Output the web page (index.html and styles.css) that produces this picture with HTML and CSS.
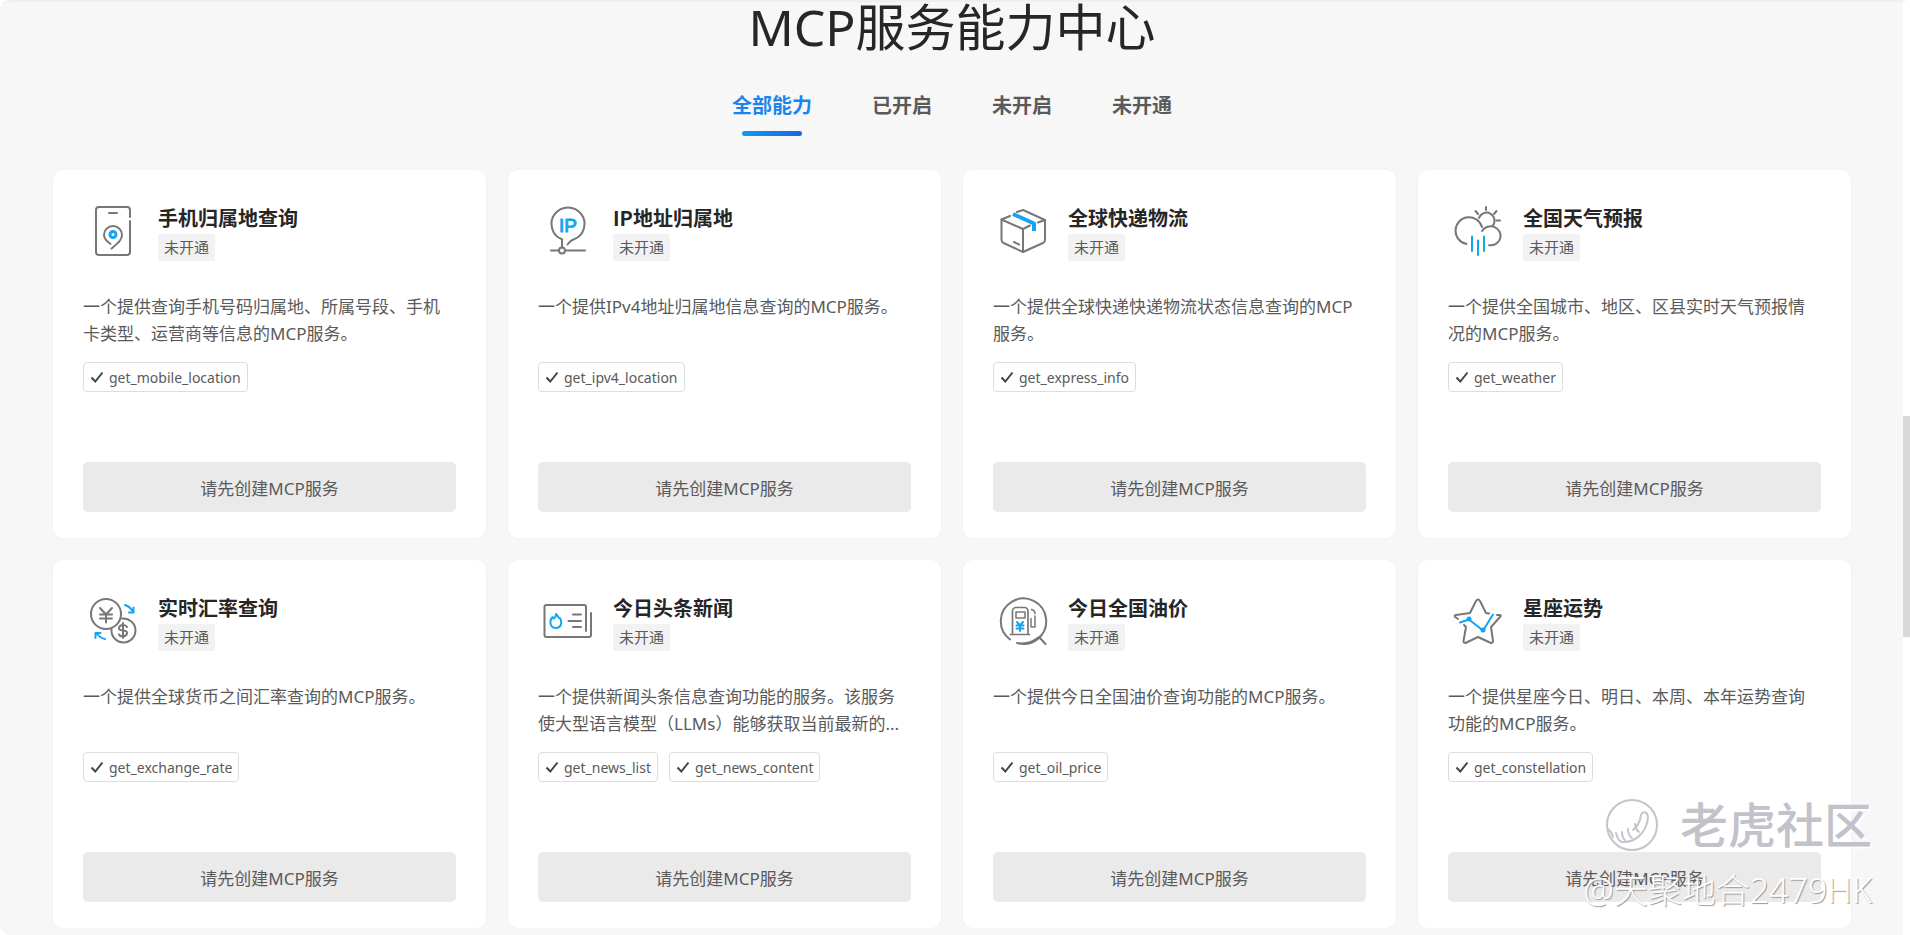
FILE: index.html
```html
<!DOCTYPE html>
<html lang="zh-CN">
<head>
  <meta charset="UTF-8" />
  <meta name="viewport" content="width=device-width, initial-scale=1.0"/>
  <title>MCP服务能力中心</title>
  <link rel="stylesheet" href="styles.css">
</head>
<body>

<!-- shared check mark for the tool tags -->
<svg class="sprite" aria-hidden="true">
  <symbol id="check" viewBox="0 0 14 14">
    <path d="M1.5 7.5 L5.3 11.5 L12.5 2.5" fill="none" stroke="#444" stroke-width="2"/>
  </symbol>
</svg>

<div class="page">
  <main class="content">
    <h1>MCP服务能力中心</h1>

    <nav class="tabs">
      <button type="button" class="tab active">全部能力</button>
      <button type="button" class="tab">已开启</button>
      <button type="button" class="tab">未开启</button>
      <button type="button" class="tab">未开通</button>
    </nav>

    <section class="cards">
      <article class="card">
        <header class="card-head">
          <svg class="icon" viewBox="0 0 60 60">
            <path d="M47 16V9a3 3 0 0 0-3-3H16a3 3 0 0 0-3 3v42a3 3 0 0 0 3 3h28a3 3 0 0 0 3-3V20M26 12h8"/>
            <path d="M27.500 43C24 40.500 21 38 21 34a9 9 0 0 1 18 0c0 5-4 8-10.500 13.500"/>
            <circle class="blue" cx="30" cy="33.500" r="3" stroke-width="3"/>
          </svg>
          <div>
            <h2>手机归属地查询</h2>
            <span class="status">未开通</span>
          </div>
        </header>
        <p class="desc">一个提供查询手机号码归属地、所属号段、手机卡类型、运营商等信息的MCP服务。</p>
        <div class="tools"><span class="tool"><svg><use href="#check"/></svg>get_mobile_location</span></div>
        <button type="button" class="create">请先创建MCP服务</button>
      </article>

      <article class="card">
        <header class="card-head">
          <svg class="icon" viewBox="0 0 60 60">
            <path d="M24 46.500V38.300A16.500 16.500 0 1 1 36 38.300C33.500 39 31.500 41 29.500 43.500"/>
            <path d="M13 49.500h8M27 49.500h20"/>
            <circle cx="24" cy="49.500" r="3"/>
            <text class="ip" x="21" y="31">IP</text>
          </svg>
          <div>
            <h2>IP地址归属地</h2>
            <span class="status">未开通</span>
          </div>
        </header>
        <p class="desc">一个提供IPv4地址归属地信息查询的MCP服务。</p>
        <div class="tools"><span class="tool"><svg><use href="#check"/></svg>get_ipv4_location</span></div>
        <button type="button" class="create">请先创建MCP服务</button>
      </article>

      <article class="card">
        <header class="card-head">
          <svg class="icon" viewBox="0 0 60 60">
            <path d="M17 15L8.500 18.500V39q0 2 2 3L30 51l20-9q2-1 2-3V19L30 9l-6 2"/>
            <path d="M8.500 18.500L30 28l7-3.500M30 28v23M45 21.500l7-2.500M21 41l5 2.500"/>
            <path class="tape" d="M20 13l21 9.500V30"/>
          </svg>
          <div>
            <h2>全球快递物流</h2>
            <span class="status">未开通</span>
          </div>
        </header>
        <p class="desc">一个提供全球快递快递物流状态信息查询的MCP服务。</p>
        <div class="tools"><span class="tool"><svg><use href="#check"/></svg>get_express_info</span></div>
        <button type="button" class="create">请先创建MCP服务</button>
      </article>

      <article class="card">
        <header class="card-head">
          <svg class="icon" viewBox="0 0 60 60">
            <path d="M18.500 43A13.500 13.500 0 1 1 34 26"/>
            <path d="M34 30a10 9.500 0 1 1 7 14.200"/>
            <path d="M31 17a8 8 0 1 1 13.500 8"/>
            <path d="M38 6v3M27.500 10l2.500 3M48.500 10l-2.500 3M48.500 19.500h3.500"/>
            <path class="blue" d="M24 35.500V50M30 39.500V54M36 35.500V50"/>
          </svg>
          <div>
            <h2>全国天气预报</h2>
            <span class="status">未开通</span>
          </div>
        </header>
        <p class="desc">一个提供全国城市、地区、区县实时天气预报情况的MCP服务。</p>
        <div class="tools"><span class="tool"><svg><use href="#check"/></svg>get_weather</span></div>
        <button type="button" class="create">请先创建MCP服务</button>
      </article>

      <article class="card">
        <header class="card-head">
          <svg class="icon" viewBox="0 0 60 60">
            <circle cx="23" cy="23" r="15"/>
            <path d="M17 17l6 6.500 6-6.500M23 23.500v8M17 23.500h12M17 27.500h12"/>
            <path d="M39 27.500a12 12 0 1 1-10.500 11"/>
            <path d="M44 36q-1-2-4-2t-4 2.500 4 3 4 3.200-4 2.800-4-2M40 32v15"/>
            <path class="blue" d="M42 14q5 1.500 8 6.500M46 21.500h4.500v-5M22 48q-5-1-8.500-6M12.500 47v-5h5"/>
          </svg>
          <div>
            <h2>实时汇率查询</h2>
            <span class="status">未开通</span>
          </div>
        </header>
        <p class="desc">一个提供全球货币之间汇率查询的MCP服务。</p>
        <div class="tools"><span class="tool"><svg><use href="#check"/></svg>get_exchange_rate</span></div>
        <button type="button" class="create">请先创建MCP服务</button>
      </article>

      <article class="card">
        <header class="card-head">
          <svg class="icon" viewBox="0 0 60 60">
            <path d="M48 40V16a2 2 0 0 0-2-2H8.500a2 2 0 0 0-2 2v28a2 2 0 0 0 2 2H51a2 2 0 0 0 2-2V22"/>
            <path d="M35 23.500h8M30.500 30h12.500M35 36h8"/>
            <path class="blue" d="M18 23c3 2.500 2 4.500 4 4 3 6 0 10-4 10s-6-3-5.500-6.500c0-2 1-3.500 2-4.500 0 1 .5 1.500 1.500 1.500 1.500-1 2-2.500 2-4.500z"/>
          </svg>
          <div>
            <h2>今日头条新闻</h2>
            <span class="status">未开通</span>
          </div>
        </header>
        <p class="desc">一个提供新闻头条信息查询功能的服务。该服务使大型语言模型（LLMs）能够获取当前最新的...</p>
        <div class="tools">
          <span class="tool"><svg><use href="#check"/></svg>get_news_list</span>
          <span class="tool"><svg><use href="#check"/></svg>get_news_content</span>
        </div>
        <button type="button" class="create">请先创建MCP服务</button>
      </article>

      <article class="card">
        <header class="card-head">
          <svg class="icon" viewBox="0 0 60 60">
            <path d="M17 48.500A22.700 22.700 0 1 1 24 52M24 52q12 2 22-6l6.500 7"/>
            <path d="M19.500 43V20a3.500 3.500 0 0 1 3.500-3.500h8.500A3.500 3.500 0 0 1 35 20v23M17.500 43.500h19" stroke-width="1.700"/>
            <path d="M23 21h9v6h-9zM38.500 18.500q3.500 1 3.500 4M38 27.500V36h4V25" stroke-width="1.500"/>
            <path class="blue" d="M24 31l3 3.500 3-3.500M27 34.500V40M23.500 34.500h7M23.500 37.500h7"/>
          </svg>
          <div>
            <h2>今日全国油价</h2>
            <span class="status">未开通</span>
          </div>
        </header>
        <p class="desc">一个提供今日全国油价查询功能的MCP服务。</p>
        <div class="tools"><span class="tool"><svg><use href="#check"/></svg>get_oil_price</span></div>
        <button type="button" class="create">请先创建MCP服务</button>
      </article>

      <article class="card">
        <header class="card-head">
          <svg class="icon" viewBox="0 0 60 60">
            <path d="M10 28l-3-2q-1-2 1-2l14-2 6-12q2-3 4 0l6 12 3 .5"/>
            <path d="M49 24h3q1.500 0 0 2l-9 10 2 14q0 2-2 2l-13-6-12.500 6q-2 0-2-2L18 36l-2-2"/>
            <path class="blue" d="M12 31.500l9-3 14 11L45 23.500"/>
            <circle class="dot" cx="21" cy="28" r="2.500"/>
            <circle class="dot" cx="35" cy="39" r="2.500"/>
          </svg>
          <div>
            <h2>星座运势</h2>
            <span class="status">未开通</span>
          </div>
        </header>
        <p class="desc">一个提供星座今日、明日、本周、本年运势查询功能的MCP服务。</p>
        <div class="tools"><span class="tool"><svg><use href="#check"/></svg>get_constellation</span></div>
        <button type="button" class="create">请先创建MCP服务</button>
      </article>
    </section>
  </main>

  <div class="scrollbar"><div class="thumb"></div></div>
</div>

<div class="watermark">
  <div class="brand">
    <svg viewBox="0 0 56 56">
      <circle cx="28" cy="28" r="25"/>
      <path d="M4 32q4 3 5 8M12 36q2 8 6 9c12 1 24-8 26-24 0-6-5-8-7-3-1 7-4 12-8 15M18 35q0 6 3 8M24 32q0 6 4 9M31 27q1 6 4 8"/>
    </svg>
    <span>老虎社区</span>
  </div>
  <div class="author">@天聚地合2479HK</div>
</div>

</body>
</html>
```
FILE: styles.css
```css
* {
  box-sizing: border-box;
}

body {
  margin: 0;
  background-color: #fff;
  font-family: "Noto Sans", "Noto Sans CJK SC", sans-serif;
  color: #5a5a5a;
}

h1, h2, p {
  margin: 0;
}

button {
  font-family: inherit;
  border: none;
  padding: 0;
  cursor: pointer;
}

.sprite {
  display: none;
}

.page {
  display: flex;
  min-height: 100vh;
  background-color: #f7f7f7;
  border-top: 2px solid #efefef;
  border-radius: 10px;
}

.content {
  flex: 1;
  padding: 0 52px 0 53px;
}

h1 {
  font-size: 50px;
  line-height: 50px;
  font-weight: 400;
  color: #262626;
  text-align: center;
}

/* tabs */
.tabs {
  display: flex;
  justify-content: center;
  gap: 60px;
  margin-top: 38px;
  height: 46px;
}

.tab {
  position: relative;
  background: none;
  font-size: 20px;
  line-height: 32px;
  height: 46px;
  padding-bottom: 14px;
  font-weight: 700;
  color: #5a5a5a;
}

.tab.active {
  color: #1a84f0;
}

.tab.active::after {
  content: "";
  position: absolute;
  left: 10px;
  right: 10px;
  bottom: 0;
  height: 5px;
  border-radius: 3px;
  background: linear-gradient(90deg, #109bf0, #1a66e0);
}

/* cards */
.cards {
  display: grid;
  grid-template-columns: repeat(4, 1fr);
  gap: 22px;
  margin-top: 34px;
}

.card {
  display: flex;
  flex-direction: column;
  min-height: 368px;
  padding: 31px 30px 26px;
  background-color: #fff;
  border-radius: 10px;
  box-shadow: 0 0 3px rgba(0,0,0,0.04);
}

.card-head {
  display: flex;
  align-items: center;
  gap: 15px;
  height: 60px;
}

.icon {
  width: 60px;
  height: 60px;
  fill: none;
  stroke: #777;
  stroke-width: 2;
  stroke-linecap: round;
  stroke-linejoin: round;
}

.icon .blue {
  stroke: #12a5f2;
  stroke-width: 3;
}

.icon path.blue {
  stroke-width: 2;
}

.icon .tape {
  stroke: #12a5f2;
  stroke-width: 4;
  stroke-linecap: butt;
}

.icon .dot {
  fill: #12a5f2;
  stroke: none;
}

.icon .ip {
  fill: #12a5f2;
  stroke: #12a5f2;
  stroke-width: 1;
  font-family: "Liberation Sans", sans-serif;
  font-size: 19px;
}

h2 {
  font-family: "Noto Sans CJK SC", sans-serif;
  font-size: 20px;
  line-height: 32px;
  font-weight: 700;
  color: #262626;
}

.status {
  display: block;
  width: fit-content;
  padding: 0 6px;
  background-color: #f2f2f2;
  border-radius: 2px;
  font-size: 15px;
  line-height: 27px;
}

.desc {
  height: 54px;
  margin-top: 32px;
  font-size: 17px;
  line-height: 27px;
}

.tools {
  display: flex;
  gap: 11px;
  margin-top: 15px;
}

.tool {
  display: flex;
  align-items: center;
  gap: 5px;
  height: 30px;
  padding: 0 6px;
  border: 1px solid #ddd;
  border-radius: 4px;
  font-size: 14px;
}

.tool svg {
  width: 14px;
  height: 14px;
}

.create {
  height: 50px;
  margin-top: auto;
  border-radius: 5px;
  background-color: #eaeaea;
  color: #5a5a5a;
  font-size: 17px;
}

.scrollbar {
  width: 7px;
  background-color: #fff;
  border-radius: 0 10px 10px 0;
}

.thumb {
  height: 221px;
  margin-top: 414px;
  background-color: #d9d9d9;
}

/* watermark over the last card */
.watermark {
  position: absolute;
  right: 38px;
  bottom: 20px;
  display: flex;
  flex-direction: column;
  align-items: flex-end;
  color: #fff;
  pointer-events: none;
}

.brand {
  display: flex;
  align-items: center;
  gap: 20px;
  font-size: 48px;
  line-height: 64px;
  font-weight: 500;
  color: #c2c2ca;
  text-shadow: 2px 2px 1px #fff;
}

.brand svg {
  width: 56px;
  height: 56px;
  fill: none;
  stroke: #c4c4ca;
  stroke-width: 2;
  stroke-linecap: round;
}

.author {
  font-size: 34px;
  line-height: 50px;
  font-weight: 300;
  margin-top: 8px;
  text-shadow: 1px 1px 1px #999;
}
```
